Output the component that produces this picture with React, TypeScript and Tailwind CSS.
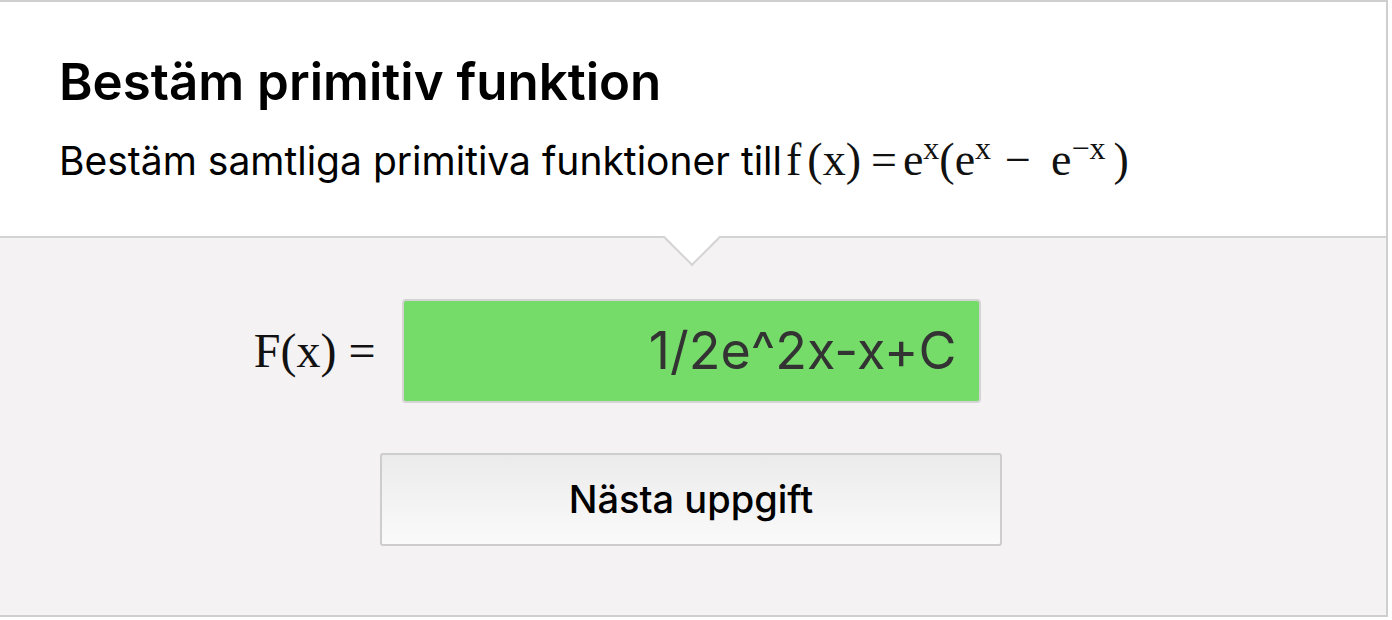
import React from "react";

export default function App() {
  const sans = { fontFamily: "Inter, 'Noto Sans', sans-serif" };
  const serif = { fontFamily: "'Liberation Serif', serif" };
  return (
    <div className="w-[1392px] h-[620px] bg-white overflow-hidden" style={sans}>
      <div className="w-[1388px] h-[617px] border-t-2 border-r-2 border-b-2 border-[#cfcfcf] flex flex-col">
        <div className="relative h-[236px] shrink-0 bg-white border-b-[2px] border-[#d3d3d3] pl-[59px] pt-[50px]">
          <h1 className="text-[51px] leading-[60px] font-semibold text-black">Bestäm primitiv funktion</h1>
          <p className="mt-[24px] text-[39px] leading-[48px] text-black flex items-baseline whitespace-nowrap">
            <span>Bestäm samtliga primitiva funktioner till</span>
            <span className="ml-[4px] text-[46px] text-[#111]" style={serif}>
              f<span className="ml-[6px]">(x)</span>
              <span className="ml-[10px] mr-[6px]">=</span>
              e<sup className="text-[32px]">x</sup>
              (e<sup className="text-[32px]">x</sup>
              <span className="ml-[14px] mr-[20px]">−</span>
              e<sup className="text-[32px]">−x</sup>
              <span className="ml-[8px]">)</span>
            </span>
          </p>
          <div className="absolute left-[672px] -bottom-[22px] w-[40px] h-[40px] bg-white border-r-[2px] border-b-[2px] border-[#d3d3d3] rotate-45" />
        </div>
        <div className="flex-1 bg-[#f4f2f3] flex flex-col items-center pt-[61px] pr-[4px]">
          <div className="grid grid-cols-[1fr_auto_1fr] w-full items-center">
            <div className="flex justify-end pr-[26px]">
              <span className="text-[48px] leading-none text-[#111]" style={serif}>F(x) =</span>
            </div>
            <div className="w-[579px] h-[104px] rounded-[4px] border-[2px] border-[#d4d4d4] bg-[#75dc6a] flex items-center justify-end pr-[22px]">
              <span className="text-[52px] text-[#333]">1/2e^2x-x+C</span>
            </div>
            <div />
          </div>
          <button className="mt-[50px] w-[622px] h-[93px] rounded-[3px] border-[2px] border-[#cdcdcd] bg-gradient-to-b from-[#ebebeb] to-[#fafafa] text-[38px] font-medium text-black">
            Nästa uppgift
          </button>
        </div>
      </div>
    </div>
  );
}
